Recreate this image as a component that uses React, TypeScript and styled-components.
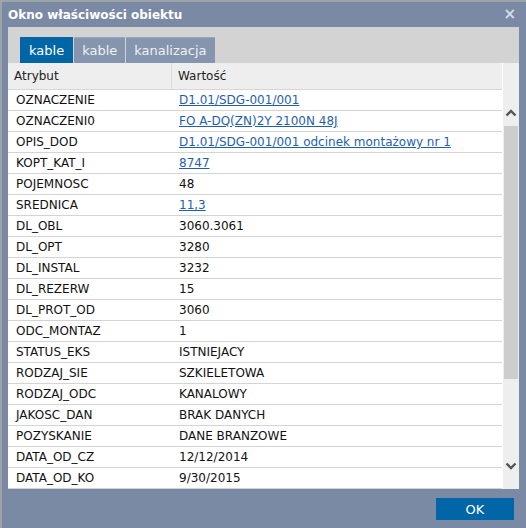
import React from "react";
import styled, { createGlobalStyle } from "styled-components";

const Global = createGlobalStyle`
  html, body {
    margin: 0;
    padding: 0;
    background: #9ea3a8;
    font-family: "DejaVu Sans", Verdana, sans-serif;
  }
`;

const Page = styled.div`
  width: 526px;
  height: 528px;
  padding: 2px 0 0 2px;
  box-sizing: border-box;
  overflow: hidden;
`;

const Dialog = styled.div`
  width: 524px;
  height: 526px;
  background: #7a8aa5;
  display: flex;
  flex-direction: column;
`;

const TitleBar = styled.div`
  height: 25px;
  display: flex;
  align-items: center;
  justify-content: space-between;
  padding: 0 10px 0 6px;
  color: #fff;
  font-weight: bold;
  font-size: 12px;
`;

const Close = styled.span`
  color: #d8dde6;
  font-size: 15px;
  font-weight: bold;
  line-height: 1;
`;

const Content = styled.div`
  margin: 0 7px 0 6px;
  background: #d3d3d3;
  display: flex;
  flex-direction: column;
`;

const Tabs = styled.div`
  display: flex;
  padding: 10px 0 0 12px;
  gap: 1px;
`;

const Tab = styled.div<{ active?: boolean }>`
  height: 26px;
  display: flex;
  align-items: center;
  padding: 0 ${(p) => (p.active ? "9px" : "8px")};
  background: ${(p) => (p.active ? "#0066a6" : "#8595ad")};
  color: ${(p) => (p.active ? "#fff" : "#eef1f5")};
  font-size: 13px;
  border-top: 1px solid ${(p) => (p.active ? "#0066a6" : "#9aa8bc")};
  box-sizing: border-box;
`;

const Grid = styled.div`
  display: grid;
  grid-template-columns: 1fr 16px;
  background: #eeeeee;
`;

const Table = styled.div`
  display: grid;
  grid-template-columns: 163px 1fr;
  border-right: 1px solid #fff;
`;

const HeadCell = styled.div<{ divider?: boolean }>`
  height: 26px;
  display: flex;
  align-items: center;
  padding-left: 6px;
  font-size: 12px;
  color: #222;
  background: #eeeeee;
  border-left: ${(p) => (p.divider ? "1px solid #dcdcdc" : "none")};
  border-bottom: 1px solid #d6d6d6;
`;

const Cell = styled.div`
  height: 21px;
  box-sizing: border-box;
  display: flex;
  align-items: center;
  padding-left: 8px;
  font-size: 12px;
  color: #111;
  background: #fff;
  border-bottom: 1px solid #d4d4d4;
  white-space: nowrap;
`;

const Link = styled.a`
  color: #1f5fae;
  text-decoration: underline;
  cursor: pointer;
`;

const Scrollbar = styled.div`
  display: flex;
  flex-direction: column;
  align-items: center;
  background: #eeeeee;
  padding-top: 27px;
`;

const Arrow = styled.div<{ up?: boolean }>`
  height: 36px;
  width: 16px;
  box-sizing: border-box;
  display: flex;
  justify-content: center;
  align-items: ${(p) => (p.up ? "flex-end" : "flex-start")};
  padding: ${(p) => (p.up ? "0 0 9px" : "9px 0 0")};
`;

const Thumb = styled.div`
  width: 14px;
  height: 253px;
  background: #cdcdcd;
`;

const Spacer = styled.div`
  flex: 1;
`;

const Footer = styled.div`
  display: flex;
  justify-content: flex-end;
  padding: 9px 12px 0 0;
`;

const OkButton = styled.button`
  width: 78px;
  height: 22px;
  border: none;
  background: #0066a8;
  color: #fff;
  font-family: inherit;
  font-size: 13px;
  cursor: pointer;
`;

const Chevron = ({ up }: { up?: boolean }) => (
  <svg width="12" height="8" viewBox="0 0 12 8">
    <path
      d={up ? "M1.5 6.5 L6 2 L10.5 6.5" : "M1.5 1.5 L6 6 L10.5 1.5"}
      fill="none"
      stroke="#555"
      strokeWidth="2.4"
    />
  </svg>
);

const rows: [string, string, boolean?][] = [
  ["OZNACZENIE", "D1.01/SDG-001/001", true],
  ["OZNACZENI0", "FO A-DQ(ZN)2Y 2100N 48J", true],
  ["OPIS_DOD", "D1.01/SDG-001/001 odcinek montażowy nr 1", true],
  ["KOPT_KAT_I", "8747", true],
  ["POJEMNOSC", "48"],
  ["SREDNICA", "11,3", true],
  ["DL_OBL", "3060.3061"],
  ["DL_OPT", "3280"],
  ["DL_INSTAL", "3232"],
  ["DL_REZERW", "15"],
  ["DL_PROT_OD", "3060"],
  ["ODC_MONTAZ", "1"],
  ["STATUS_EKS", "ISTNIEJACY"],
  ["RODZAJ_SIE", "SZKIELETOWA"],
  ["RODZAJ_ODC", "KANALOWY"],
  ["JAKOSC_DAN", "BRAK DANYCH"],
  ["POZYSKANIE", "DANE BRANZOWE"],
  ["DATA_OD_CZ", "12/12/2014"],
  ["DATA_OD_KO", "9/30/2015"],
];

export default function App() {
  return (
    <Page>
      <Global />
      <Dialog>
        <TitleBar>
          <span>Okno właściwości obiektu</span>
          <Close>×</Close>
        </TitleBar>
        <Content>
          <Tabs>
            <Tab active>kable</Tab>
            <Tab>kable</Tab>
            <Tab>kanalizacja</Tab>
          </Tabs>
          <Grid>
            <Table>
              <HeadCell>Atrybut</HeadCell>
              <HeadCell divider>Wartość</HeadCell>
              {rows.map(([name, value, link]) => (
                <React.Fragment key={name}>
                  <Cell>{name}</Cell>
                  <Cell>{link ? <Link>{value}</Link> : value}</Cell>
                </React.Fragment>
              ))}
            </Table>
            <Scrollbar>
              <Arrow up>
                <Chevron up />
              </Arrow>
              <Thumb />
              <Spacer />
              <Arrow>
                <Chevron />
              </Arrow>
            </Scrollbar>
          </Grid>
        </Content>
        <Footer>
          <OkButton>OK</OkButton>
        </Footer>
      </Dialog>
    </Page>
  );
}
